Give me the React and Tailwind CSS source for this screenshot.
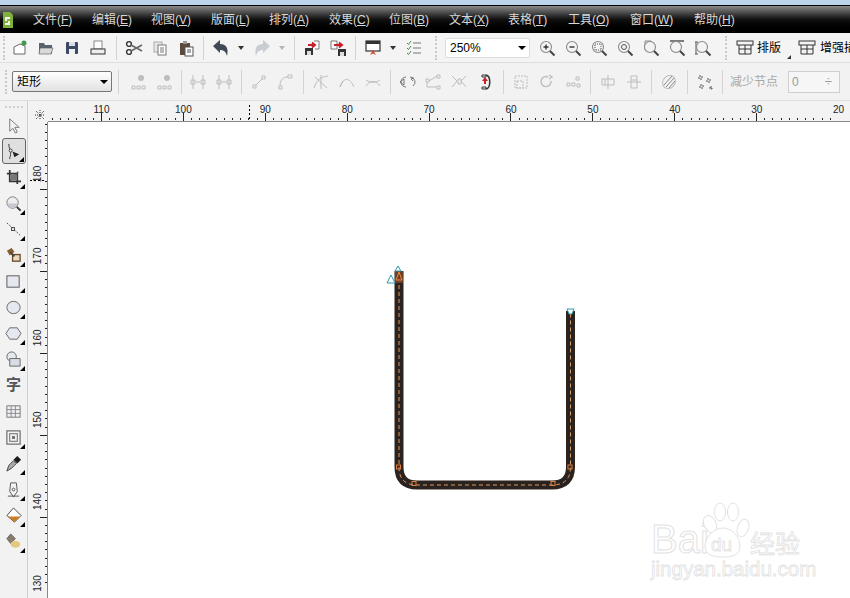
import React from 'react';

const cjk = { fontFamily: '"Liberation Sans", "Noto Sans CJK SC", sans-serif' };

const menus = [
  ['文件', 'F', 'w-[59px]'],
  ['编辑', 'E', 'w-[59px]'],
  ['视图', 'V', 'w-[60px]'],
  ['版面', 'L', 'w-[58px]'],
  ['排列', 'A', 'w-[60px]'],
  ['效果', 'C', 'w-[60px]'],
  ['位图', 'B', 'w-[60px]'],
  ['文本', 'X', 'w-[59px]'],
  ['表格', 'T', 'w-[60px]'],
  ['工具', 'O', 'w-[62px]'],
  ['窗口', 'W', 'w-[64px]'],
  ['帮助', 'H', 'w-[60px]'],
];

const Svg = ({ children, size = 18 }) => (
  <svg width={size} height={size} viewBox="0 0 18 18" fill="none">
    {children}
  </svg>
);

const mag = (inner) => (
  <>
    <circle cx="8" cy="8" r="5.5" fill="#f1f3f4" stroke="#8a8a8a" strokeWidth="1.1" />
    <path d="M12 12l4.5 4.5" stroke="#444" strokeWidth="2" />
    {inner}
  </>
);

const g = '#bdbdbd';

const icons = {
  new: <><path d="M3 8l6-3 5 2v8H3z" fill="#fff" stroke="#666" /><circle cx="13" cy="4" r="2.5" fill="#3f9b4a" /></>,
  open: <><path d="M2 4h5l1 2h7v9H2z" fill="#59636e" /><path d="M3 9h13l-2 6H2z" fill="#d9d9d9" stroke="#555" strokeWidth=".6" /></>,
  save: <><rect x="3" y="3" width="12" height="12" rx="1" fill="#3c4a66" /><rect x="6" y="3" width="6" height="4" fill="#d8dde5" /><rect x="6" y="10" width="6" height="5" fill="#eef0f4" /></>,
  print: <><rect x="5" y="2" width="8" height="8" fill="#fff" stroke="#888" /><rect x="2" y="10" width="14" height="5" fill="#eee" stroke="#333" /></>,
  cut: <><circle cx="4" cy="5" r="2.4" stroke="#333" strokeWidth="1.4" /><circle cx="4" cy="13" r="2.4" stroke="#333" strokeWidth="1.4" /><path d="M6 6l11 6M6 12l11-6" stroke="#666" strokeWidth="1.5" /></>,
  copy: <><rect x="3" y="3" width="8" height="10" fill="#e4e8ec" stroke="#aaa" /><rect x="7" y="6" width="8" height="10" fill="#fff" stroke="#777" /><path d="M9 9h4M9 11h4M9 13h4" stroke="#777" /></>,
  paste: <><rect x="3" y="4" width="10" height="12" fill="#5b4a3c" /><rect x="6" y="2" width="4" height="3" fill="#999" /><rect x="8" y="8" width="8" height="9" fill="#fff" stroke="#555" /><path d="M10 11h4M10 13h4" stroke="#555" /></>,
  undo: <path d="M1 7l7-6v4c6 0 9 4 7 12-1-4-3-6-7-6v3z" fill="#3f4a56" />,
  redo: <path d="M17 7l-7-6v4c-6 0-9 4-7 12 1-4 3-6 7-6v3z" fill="#c9cdd1" />,
  imp: <><rect x="2" y="9" width="8" height="7" fill="#333" /><rect x="4" y="12" width="4" height="4" fill="#ddd" /><path d="M11 2h5v8h-4" fill="#fff" stroke="#777" /><path d="M5 6h6M9 3.500L12 6 9 8.500" stroke="#c8202a" strokeWidth="2" /></>,
  exp: <><path d="M2 2h6v8H2z" fill="#fff" stroke="#777" /><rect x="9" y="10" width="8" height="7" fill="#333" /><rect x="11" y="13" width="4" height="4" fill="#ddd" /><path d="M5 6h7M10 3.500L13 6l-3 2.500" stroke="#c8202a" strokeWidth="2" /></>,
  app: <><rect x="2" y="2" width="14" height="10" fill="#fff" stroke="#333" strokeWidth="1.200" /><rect x="2" y="2" width="14" height="3" fill="#333" /><path d="M6 16l3-5 3 5-3-1.500z" fill="#d9472b" /></>,
  opts: <><path d="M2 4l1.500 1.500L6 2M2 9l1.500 1.500L6 7M2 14l1.500 1.500L6 12" stroke="#4a8a4a" /><path d="M8 4h8M8 9h8M8 14h8" stroke="#777" /></>,
  zin: mag(<path d="M5.500 8h5M8 5.500v5" stroke="#333" strokeWidth="1.400" />),
  zout: mag(<path d="M5.500 8h5" stroke="#333" strokeWidth="1.400" />),
  zsel: mag(<rect x="5" y="5" width="6" height="6" stroke="#555" strokeDasharray="1 1" />),
  zall: mag(<circle cx="8" cy="8" r="2.500" stroke="#555" />),
  zpage: <><path d="M3 2h6l3 3v6H3z" fill="#f5f5f5" stroke="#888" />{mag()}</>,
  zw: <><path d="M2 2h14" stroke="#555" strokeWidth="1.500" />{mag()}</>,
  zh: <><path d="M2 3v12M1 3h3M1 15h3" stroke="#555" />{mag()}</>,
  layout: <><rect x="1" y="2" width="16" height="4" stroke="#333" /><path d="M3 6v9h12V6M3 10h12M9 6v9" stroke="#333" /></>,
  add: <><circle cx="12" cy="5" r="3" fill={g} /><path d="M3 13h3v3H3zM8 13h3v3H8zM13 13h3v3h-3z" stroke={g} /></>,
  del: <><circle cx="12" cy="5" r="3" fill={g} /><path d="M3 13h3v3H3zM8 13h3v3H8zM13 13h3v3h-3z" stroke={g} /></>,
  joinA: <path d="M4 2v14M14 2v14M2 7h4v4H2zM12 7h4v4h-4zM7 9h4" stroke={g} />,
  lineA: <path d="M3 12h3v3H3zM12 3h3v3h-3zM6 12l6-6" stroke={g} />,
  curveA: <path d="M3 13h3v3H3zM12 2h4v3h-4zM4 13c0-6 3-9 8-9" stroke={g} />,
  sm1: <path d="M2 15C5 6 9 4 16 3M3 4l12 11M9 2v14" stroke={g} />,
  sm2: <path d="M2 14C5 4 12 4 16 14M2 14l3-6" stroke={g} />,
  sm3: <path d="M2 13c4-6 10-6 14 0M2 7c4 3 10 3 14 0" stroke={g} />,
  rev: <path d="M8 4a5 5 0 0 0 0 10M12 4a5 5 0 0 1 3 9M2 9l4-3v6zM16 5l-3 1 2 2" stroke="#777" />,
  ext: <path d="M2 6h3v3H2zM13 2h3v3h-3zM13 13h3v3h-3zM5 8l8-5M3 9v5h10" stroke={g} />,
  cross: <path d="M2 3l5 5-5 6M16 3l-5 5 5 6M8 6h3v5H8z" stroke={g} />,
  dir: <><path d="M10 2c5 1 5 13 0 14" stroke="#333" strokeWidth="1.500" /><path d="M9 4l-3 4h2v3h2V8h2z" fill="#c8202a" /><path d="M6 2h4v2H6zM6 14h4v2H6z" stroke="#333" /></>,
  bx1: <path d="M3 3h12v12H3zM5 8h6v7H5z" stroke={g} strokeDasharray="2 1" />,
  bx2: <path d="M13 8a5 5 0 1 1-3-4M11 2l3 2-3 2" stroke={g} strokeWidth="1.400" />,
  bx3: <path d="M3 10h3v3H3zM8 10h3v3H8zM12 4h3v3h-3zM13 11h3v3h-3z" stroke={g} />,
  al1: <path d="M9 2v14M3 6h12v6H3zM6 6v6" stroke={g} />,
  al2: <path d="M2 9h14M6 3h6v12H6zM6 7h6" stroke={g} />,
  hat: <><ellipse cx="9" cy="9" rx="6" ry="7" stroke={g} transform="rotate(40 9 9)" /><path d="M4 12l8-9M6 14l8-9M9 15l6-7" stroke="#8a8a8a" /></>,
  nodes: <path d="M3 3h3v3H3zM11 6h3v3h-3zM4 12h3v3H4zM14 14h2v2h-2z" stroke="#555" strokeDasharray="2 1" />,
};

const tools = [
  [<path d="M5 2v13l3.500-3 2.500 5 2-1-2.500-5h4.500z" fill="#f2f2f2" stroke="#777" />, false],
  [<><path d="M4 1c0 5 2 5 2 9s-1 5-1 7" stroke="#333" /><circle cx="6" cy="8" r="1.600" fill="#fff" stroke="#333" /><path d="M8 9l7 3-5 3z" fill="#222" /></>, true],
  [<><path d="M2 5h11v11M5 1v12h12" stroke="#333" strokeWidth="1.800" /><path d="M14 3L5 13" stroke="#555" strokeWidth="1.500" /><rect x="6" y="6" width="6" height="6" fill="#777" /></>, true],
  [<><circle cx="8" cy="8" r="6" fill="#eee" stroke="#777" /><path d="M3 9a5 5 0 0 0 10 0z" fill="#c8c8d0" /><path d="M12.500 12.500l4 4" stroke="#333" strokeWidth="2" /></>, true],
  [<><path d="M2 2l14 13" stroke="#444" strokeDasharray="2 1.500" /><rect x="7" y="7" width="3" height="3" fill="#fff" stroke="#333" /></>, true],
  [<><rect x="8" y="8" width="8" height="7" fill="#e8d8c0" stroke="#6b4a2a" strokeWidth="1.400" /><path d="M2 4l5-3 3 4-5 4z" fill="#8a5a30" /><path d="M6 6l4 4" stroke="#444" strokeWidth="2" /></>, true],
  [<rect x="2" y="3" width="13" height="12" fill="#e6e8f0" stroke="#555" />, true],
  [<ellipse cx="9" cy="9" rx="7" ry="6.500" fill="#e6e8f0" stroke="#666" />, true],
  [<path d="M5 3h8l4 6-4 6H5L1 9z" fill="#e6e8f0" stroke="#666" />, true],
  [<><circle cx="7" cy="6" r="5" fill="#e6e8f0" stroke="#666" /><path d="M5 8h11v8H5z" fill="#d8dce4" stroke="#666" /></>, true],
  null,
  [<><rect x="2" y="3" width="14" height="12" fill="#f0f0f4" stroke="#777" /><path d="M2 7h14M2 11h14M6.500 3v12M11 3v12" stroke="#888" /></>, false],
  [<><rect x="2" y="2" width="14" height="14" stroke="#666" strokeWidth="1.200" /><rect x="5" y="5" width="8" height="8" stroke="#666" /><rect x="7.500" y="7.500" width="3" height="3" fill="#666" /></>, true],
  [<><path d="M2 17l2-6 5-5 3 3-5 5z" fill="#aaa" stroke="#444" /><path d="M9 5l4-4 4 4-4 4z" fill="#1c1c1c" /></>, true],
  [<><path d="M6 2h6l1 9-4 6-4-6z" fill="#f3f3f3" stroke="#555" /><circle cx="9" cy="9" r="1.500" stroke="#555" /><path d="M3 16h12" stroke="#555" /></>, true],
  [<><path d="M9 1l8 8-7 7-8-7z" fill="#fff" stroke="#444" /><path d="M3 10h13l-6 6z" fill="#c87f28" /></>, true],
  [<><path d="M6 1l5 5-5 5-4-5z" fill="#8a7a6a" stroke="#666" /><ellipse cx="11" cy="12" rx="5" ry="3.500" fill="#e5c880" /></>, true],
];

const Btn = ({ name }) => (
  <div className="flex h-[26px] w-[26px] shrink-0 items-center justify-center">
    <Svg>{icons[name]}</Svg>
  </div>
);

const Sep = ({ w = 'w-[10px]' }) => (
  <div className={`flex shrink-0 justify-center ${w}`}>
    <div className="h-[24px] w-px bg-[#d3d3d3]" />
  </div>
);

const Grip = ({ w = 'w-[18px]' }) => (
  <div className={`flex shrink-0 justify-center ${w}`}>
    <div className="h-[24px] border-l-2 border-dotted border-[#c9c9c9]" />
  </div>
);

const Caret = ({ color = 'border-t-[#333]', w = 'w-[14px]' }) => (
  <div className={`flex shrink-0 justify-center ${w}`}>
    <div className={`h-0 w-0 border-x-[3px] border-t-[4px] border-x-transparent ${color}`} />
  </div>
);

const Combo = ({ label, className }) => (
  <div className={`flex shrink-0 items-center justify-between rounded-[2px] pl-1 pr-[3px] ${className}`}>
    <span>{label}</span>
    <div className="h-0 w-0 border-x-[4px] border-t-[4px] border-x-transparent border-t-black" />
  </div>
);

const Mainbar = () => (
  <div className="flex h-[29px] items-center bg-[#f4f4f4] text-black">
    <Grip w="w-[7px]" />
    <Btn name="new" />
    <Btn name="open" />
    <Btn name="save" />
    <Btn name="print" />
    <Sep />
    <Btn name="cut" />
    <Btn name="copy" />
    <Btn name="paste" />
    <Sep w="w-[9px]" />
    <Btn name="undo" />
    <Caret />
    <div className="w-px shrink-0" />
    <Btn name="redo" />
    <Caret color="border-t-[#b5b5b5]" />
    <Sep />
    <Btn name="imp" />
    <Btn name="exp" />
    <Sep w="w-[9px]" />
    <Btn name="app" />
    <Caret />
    <div className="w-px shrink-0" />
    <Btn name="opts" />
    <Grip />
    <Combo label="250%" className="h-[20px] w-[85px] border border-[#dcdcdc] bg-white text-[12px]" />
    <div className="w-[4px] shrink-0" />
    <Btn name="zin" />
    <Btn name="zout" />
    <Btn name="zsel" />
    <Btn name="zall" />
    <Btn name="zpage" />
    <Btn name="zw" />
    <Btn name="zh" />
    <Grip w="w-[20px]" />
    <div className="flex shrink-0 items-center gap-[3px] text-[12px]">
      <Svg>{icons.layout}</Svg>
      <span>排版</span>
    </div>
    <div className="relative w-[17px] shrink-0">
      <div className="absolute left-[6px] top-[7px] h-0 w-0 border-b-[4px] border-l-[4px] border-b-[#333] border-l-transparent" />
    </div>
    <div className="flex shrink-0 items-center gap-[4px] text-[12px]">
      <Svg>{icons.layout}</Svg>
      <span>增强插</span>
    </div>
  </div>
);

const Propbar = () => (
  <div className="flex h-[39px] items-center border-y border-[#dedede] bg-[#f2f2f2]">
    <Grip w="w-[12px]" />
    <Combo label="矩形" className="h-[21px] w-[100px] border border-[#777] bg-gradient-to-b from-white to-[#e2e2e2] text-[12px] text-black" />
    <Sep w="w-[13px]" />
    <Btn name="add" />
    <Btn name="del" />
    <Sep w="w-[8px]" />
    <Btn name="joinA" />
    <Btn name="joinA" />
    <Sep w="w-[9px]" />
    <Btn name="lineA" />
    <Btn name="curveA" />
    <Sep />
    <Btn name="sm1" />
    <Btn name="sm2" />
    <Btn name="sm3" />
    <Sep w="w-[8px]" />
    <Btn name="rev" />
    <Btn name="ext" />
    <Btn name="cross" />
    <Btn name="dir" />
    <Sep />
    <Btn name="bx1" />
    <Btn name="bx2" />
    <Btn name="bx3" />
    <Sep w="w-[9px]" />
    <Btn name="al1" />
    <Btn name="al2" />
    <Sep w="w-[9px]" />
    <Btn name="hat" />
    <Sep />
    <Btn name="nodes" />
    <Sep w="w-[8px]" />
    <span className="ml-[4px] w-[58px] shrink-0 text-[12px] text-[#a8a8a8]">减少节点</span>
    <div className="flex h-[22px] w-[52px] shrink-0 items-center justify-between border border-[#cfcfcf] bg-[#f6f6f6] pl-[3px] pr-[7px] text-[12px] text-[#999]">
      <span>0</span>
      <span className="text-[13px]">÷</span>
    </div>
  </div>
);

const Toolbox = () => (
  <div className="flex w-[28px] shrink-0 flex-col items-center border-r border-[#cfcfcf] bg-[#f2f2f2]">
    <div className="mt-[5px] mb-[4px] h-0 w-[18px] border-t-2 border-dotted border-[#cfcfcf]" />
    {tools.map((t, i) =>
      t === null ? (
        <div key={i} className="flex h-[26px] shrink-0 items-center justify-center text-[15px] font-bold text-[#555]">字</div>
      ) : (
        <div key={i} className={`relative flex h-[26px] w-[24px] shrink-0 items-center justify-center rounded-[3px] ${i === 1 ? 'border border-[#666] bg-[#dfdfdf]' : ''}`}>
          <Svg size={17}>{t[0]}</Svg>
          {t[1] && <div className="absolute bottom-[1px] right-[1px] h-0 w-0 border-b-[5px] border-l-[5px] border-b-black border-l-transparent" />}
        </div>
      )
    )}
  </div>
);

const hLabels = [110, 100, 90, 80, 70, 60, 50, 40, 30, 20];
const vLabels = [180, 170, 160, 150, 140, 130];

const TopRuler = () => (
  <div className="h-[21px] shrink-0 bg-[#f3f3f3]">
    <svg width="822" height="21" viewBox="28 101 822 21">
      <path d="M36 111l8 8M44 111l-8 8M40 110v10M35 115h10" stroke="#333" strokeDasharray="1 1" />
      {Array.from({ length: 100 }, (_, i) => {
        const x = 19 + i * 8.19;
        if (x < 48) return null;
        const major = i % 10 === 0;
        return <rect key={i} x={Math.round(x)} y={major ? 113 : 118} width="1" height={major ? 8 : 2} fill="#222" />;
      })}
      {hLabels.map((n, i) => (
        <text key={n} x={101.500 + i * 81.9} y="113" textAnchor="middle" fontSize="10" fill="#222" fontFamily="Liberation Sans">{n}</text>
      ))}
      <path d="M249.500 105v15" stroke="#000" strokeDasharray="2 2" />
      <rect x="48" y="121" width="802" height="1" fill="#888" />
    </svg>
  </div>
);

const LeftRuler = () => (
  <div className="w-[20px] shrink-0 bg-[#f3f3f3]">
    <svg width="20" height="476" viewBox="28 122 20 476">
      {Array.from({ length: 60 }, (_, i) => {
        const y = 99 + i * 8.19;
        if (y < 122) return null;
        const major = i % 10 === 1;
        return <rect key={i} x={major ? 40 : 45} y={Math.round(y)} width={major ? 7 : 2} height="1" fill="#222" />;
      })}
      {vLabels.map((n, i) => {
        const y = 174 + i * 81.9;
        return <text key={n} x="41" y={y} transform={`rotate(-90 41 ${y})`} textAnchor="middle" fontSize="10" fill="#222" fontFamily="Liberation Sans">{n}</text>;
      })}
      <path d="M30 180.500h15" stroke="#000" strokeDasharray="2 2" />
      <rect x="47" y="122" width="1" height="476" fill="#888" />
    </svg>
  </div>
);

const uPath = 'M399 271V467Q399 485 417 485H552Q570.500 485 570.500 467V311';

const Drawing = () => (
  <svg className="absolute inset-0" width="802" height="476" viewBox="48 122 802 476" fill="none">
    <path d={uPath} stroke="#2a231f" strokeWidth="9" />
    <path d={uPath} stroke="#d99a63" strokeWidth="1" strokeDasharray="4 3" />
    <rect x="395" y="271" width="8" height="12" fill="#6e3f28" />
    <path d="M399 272l-3 8h6z" stroke="#f08a3c" />
    {[[398.500, 467], [414, 483.500], [553, 483.500], [570, 467]].map(([x, y]) => (
      <rect key={x} x={x - 2} y={y - 2} width="4" height="4" stroke="#e08040" />
    ))}
    <path d="M398 266l-3 5h6zM391 275l-4 8h8z" stroke="#2a9ab0" fill="#fff" />
    <path d="M567 309h7l-2 5h-3z" stroke="#2a9ab0" fill="#fff" />
    <g stroke="#e2e2e2" fill="#fff">
      <text x="651" y="553" fontSize="40" fontFamily="Liberation Sans" strokeWidth="1">Bai</text>
      <ellipse cx="710" cy="524" rx="6" ry="9" transform="rotate(-25 710 524)" />
      <ellipse cx="720" cy="512" rx="5.500" ry="9" />
      <ellipse cx="733" cy="512" rx="5.500" ry="9" />
      <ellipse cx="743" cy="528" rx="5.500" ry="9" transform="rotate(20 743 528)" />
      <path d="M723 528c9 0 17 9 17 18s-7 11-17 11-18-2-18-11 9-18 18-18z" />
      <text x="711" y="551" fontSize="19" fontFamily="Liberation Sans" strokeWidth=".8">du</text>
      <text x="750" y="553" fontSize="25" style={cjk} strokeWidth=".8">经验</text>
      <text x="651" y="576" fontSize="20.500" fontFamily="Liberation Sans" strokeWidth=".8">jingyan.baidu.com</text>
    </g>
  </svg>
);

export default function App() {
  return (
    <div className="flex h-[598px] w-[850px] flex-col overflow-hidden bg-white" style={cjk}>
      <div className="h-[5px] shrink-0 bg-[#bcd4ec]" />
      <div className="flex h-[28px] shrink-0 items-center border-t border-black bg-gradient-to-b from-[#8c8c8c] via-[#111] via-50% to-black pl-[3px] text-[12px] text-[#d8d8d8]">
        <svg className="mr-[20px] shrink-0" width="10" height="16" viewBox="0 0 10 16">
          <path d="M0 0h7l3 3v13H0z" fill="#7fb03c" />
          <path d="M2 5h5v2H4v2h3v4H2v-2h3V9H2z" fill="#f2f6e6" />
        </svg>
        {menus.map(([name, key, w]) => (
          <div key={key} className={`shrink-0 ${w}`}>
            {name}(<u>{key}</u>)
          </div>
        ))}
      </div>
      <Mainbar />
      <Propbar />
      <div className="flex min-h-0 flex-1">
        <Toolbox />
        <div className="flex min-w-0 flex-1 flex-col">
          <TopRuler />
          <div className="flex min-h-0 flex-1">
            <LeftRuler />
            <div className="relative flex-1 bg-white">
              <Drawing />
            </div>
          </div>
        </div>
      </div>
    </div>
  );
}
